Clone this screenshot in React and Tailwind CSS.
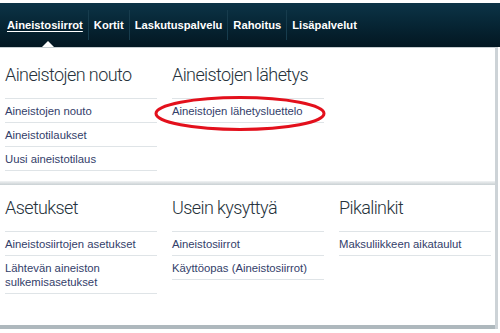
import React from 'react';

const navItems = ['Aineistosiirrot', 'Kortit', 'Laskutuspalvelu', 'Rahoitus', 'Lisäpalvelut'];

const topCols = [
  { title: 'Aineistojen nouto', links: [['Aineistojen nouto'], ['Aineistotilaukset'], ['Uusi aineistotilaus']] },
  { title: 'Aineistojen lähetys', links: [['Aineistojen lähetysluettelo']] },
  { title: '', links: [] },
];

const bottomCols = [
  { title: 'Asetukset', links: [['Aineistosiirtojen asetukset'], ['Lähtevän aineiston', 'sulkemisasetukset']] },
  { title: 'Usein kysyttyä', links: [['Aineistosiirrot'], ['Käyttöopas (Aineistosiirrot)']] },
  { title: 'Pikalinkit', links: [['Maksuliikkeen aikataulut']] },
];

const Column = ({ col }) => (
  <div className="flex flex-col">
    <div className="h-6 leading-6 mb-[11px] text-[18px] font-light tracking-[-0.6px] text-[#26323b] whitespace-nowrap" style={{ fontFamily: 'Roboto, sans-serif' }}>
      {col.title}
    </div>
    {col.links.length > 0 && (
      <div className="border-b border-[#dfe4e7]">
        {col.links.map((l, i) => (
          <div key={i} className={`border-t border-[#dfe4e7] flex flex-col justify-center text-[11.3px] leading-[14px] text-[#33406a] ${l.length > 1 ? 'h-[38px]' : 'h-6'}`}>
            {l.map((t) => <span key={t}>{t}</span>)}
          </div>
        ))}
      </div>
    )}
  </div>
);

export default function App() {
  return (
    <div className="relative w-[500px] h-[333px] bg-white overflow-hidden" style={{ fontFamily: '"Liberation Sans", Arial, sans-serif' }}>
      {/* nav */}
      <div className="pt-[3px]">
        <div className="relative h-[44px] bg-gradient-to-b from-[#0c3447] to-[#031722] flex items-center pl-[7px]">
          {navItems.map((item, i) => (
            <div key={item} className="flex items-center">
              {i > 0 && <div className="w-px h-[30px] bg-[#173c4d] mx-[5px]" />}
              <span className={`text-[11.2px] font-bold text-white ${i === 0 ? 'underline underline-offset-2' : ''}`}>{item}</span>
            </div>
          ))}
          <div className="absolute left-[42px] bottom-0 w-0 h-0 border-l-[6px] border-r-[6px] border-b-[6px] border-l-transparent border-r-transparent border-b-white" />
        </div>
      </div>

      {/* top panel */}
      <div className="w-[498px] border-r-[3px] border-[#cdd3d7]">
        <div className="border-t border-[#c5cdd1] pt-[15px] pb-[10px] pl-[5px] grid grid-cols-[152px_152px_152px] gap-x-[15px]">
          {topCols.map((c, i) => <Column key={i} col={c} />)}
        </div>
        <div className="h-[4px] bg-gradient-to-b from-[#f1f3f4] to-[#c9d0d3]" />
        <div className="pt-[11px] pl-[5px] h-[140px] grid grid-cols-[152px_152px_152px] gap-x-[15px] content-start">
          {bottomCols.map((c, i) => <Column key={i} col={c} />)}
        </div>
        <div className="h-[4px] bg-[#aeb8bd]" />
      </div>

      {/* red marker */}
      <svg className="absolute left-0 top-0" width="500" height="333">
        <ellipse cx="240" cy="113.5" rx="84" ry="16" fill="none" stroke="#e3101c" strokeWidth="3" />
      </svg>
    </div>
  );
}
